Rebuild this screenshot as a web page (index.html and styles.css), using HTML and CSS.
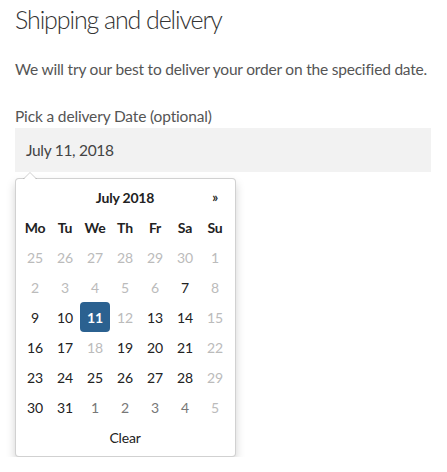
FILE: index.html
```html
<!DOCTYPE html>
<html>
<head>
<meta charset="utf-8">
<link rel="stylesheet" href="styles.css">
</head>
<body>
<h1 class="title">Shipping and delivery</h1>
<p class="intro">We will try our best to deliver your order on the specified date.</p>
<label class="field-label">Pick a delivery Date (optional)</label>
<div class="date-input">July 11, 2018</div>
<div class="picker">
  <span class="arrow"></span>
  <div class="grid">
    <div class="cell"></div>
    <div class="month">July 2018</div>
    <div class="cell next">»</div>
    <div class="cell dow">Mo</div><div class="cell dow">Tu</div><div class="cell dow">We</div><div class="cell dow">Th</div><div class="cell dow">Fr</div><div class="cell dow">Sa</div><div class="cell dow">Su</div>
    <div class="cell off">25</div><div class="cell off">26</div><div class="cell off">27</div><div class="cell off">28</div><div class="cell off">29</div><div class="cell off">30</div><div class="cell off">1</div>
    <div class="cell off">2</div><div class="cell off">3</div><div class="cell off">4</div><div class="cell off">5</div><div class="cell off">6</div><div class="cell">7</div><div class="cell off">8</div>
    <div class="cell">9</div><div class="cell">10</div><div class="cell active">11</div><div class="cell off">12</div><div class="cell">13</div><div class="cell">14</div><div class="cell off">15</div>
    <div class="cell">16</div><div class="cell">17</div><div class="cell off">18</div><div class="cell">19</div><div class="cell">20</div><div class="cell">21</div><div class="cell off">22</div>
    <div class="cell">23</div><div class="cell">24</div><div class="cell">25</div><div class="cell">26</div><div class="cell">27</div><div class="cell">28</div><div class="cell off">29</div>
    <div class="cell">30</div><div class="cell">31</div><div class="cell new">1</div><div class="cell new">2</div><div class="cell new">3</div><div class="cell new">4</div><div class="cell off">5</div>
    <div class="clear">Clear</div>
  </div>
</div>
</body>
</html>
```
FILE: styles.css
```css
body {
  margin: 0;
  padding: 0 15px;
  font-family: Lato, "Noto Sans", sans-serif;
  color: #3d3d3d;
  background: #fff;
}
.title {
  margin: 0;
  padding-top: 1px;
  font-size: 25px;
  font-weight: 300;
  letter-spacing: -1.1px;
  line-height: 36px;
  color: #333;
}
.intro {
  margin: 20px 0 0;
  font-size: 15.5px;
  letter-spacing: -0.2px;
  line-height: 24px;
  color: #555;
  white-space: nowrap;
}
.field-label {
  display: block;
  margin-top: 23px;
  font-size: 15.5px;
  letter-spacing: -0.15px;
  line-height: 24px;
  color: #555;
}
.date-input {
  margin-top: 0;
  width: 416px;
  height: 44px;
  box-sizing: border-box;
  padding: 0 11px;
  background: #f2f2f2;
  font-size: 15.5px;
  letter-spacing: -0.3px;
  line-height: 44px;
  color: #444;
}
.picker {
  position: relative;
  margin-top: 6px;
  width: 221px;
  box-sizing: border-box;
  padding: 3px 4px 4px;
  border: 1px solid rgba(0, 0, 0, 0.18);
  border-radius: 4px;
  background: #fff;
  box-shadow: 0 5px 10px rgba(0, 0, 0, 0.18);
}
.arrow {
  position: absolute;
  top: -7px;
  left: 7px;
  width: 0;
  height: 0;
  border-left: 7px solid transparent;
  border-right: 7px solid transparent;
  border-bottom: 7px solid rgba(0, 0, 0, 0.18);
}
.arrow::after {
  content: "";
  position: absolute;
  top: 1px;
  left: -6px;
  border-left: 6px solid transparent;
  border-right: 6px solid transparent;
  border-bottom: 6px solid #fff;
}
.grid {
  display: grid;
  grid-template-columns: repeat(7, 30px);
  grid-auto-rows: 30px;
  font-size: 14px;
  letter-spacing: -0.2px;
  color: #222;
}
.cell {
  display: flex;
  align-items: center;
  justify-content: center;
  border-radius: 4px;
}
.month {
  grid-column: span 5;
  display: flex;
  align-items: center;
  justify-content: center;
  font-weight: 700;
}
.next { font-weight: 700; font-size: 13px; }
.dow { font-weight: 700; }
.off { color: #bbb; }
.new { color: #777; }
.active {
  background: #2b6190;
  color: #fff;
  font-weight: 700;
}
.clear {
  grid-column: span 7;
  display: flex;
  align-items: center;
  justify-content: center;
}
```
